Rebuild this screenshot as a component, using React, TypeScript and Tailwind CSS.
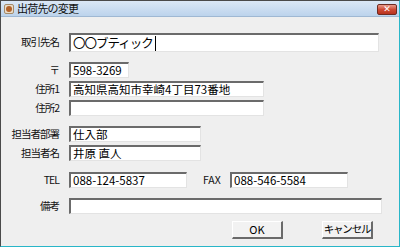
import React from "react";

const font = { fontFamily: '"MS UI Gothic","Noto Sans CJK JP","Noto Sans",sans-serif' };

function Field({ w, h = "h-[16px]", value = "", big = false }: { w: string; h?: string; value?: string; big?: boolean }) {
  return (
    <div
      className={`${w} ${h} bg-white border-t-2 border-l-2 border-b border-r border-t-[#6b6b6b] border-l-[#6b6b6b] border-b-[#e3e3e3] border-r-[#e3e3e3] flex items-center pl-[2px] overflow-hidden whitespace-nowrap ${big ? "text-[12.5px] tracking-[-1px]" : "text-[11.5px]"} text-black leading-none`}
    >
      {value}
      {big && <span className="inline-block w-[1px] h-[15px] bg-black ml-[2px]" />}
    </div>
  );
}

function Label({ children }: { children: React.ReactNode }) {
  return (
    <div className="w-[58px] text-right text-[10.5px] tracking-[-1px] text-[#111] leading-none whitespace-nowrap">
      {children}
    </div>
  );
}

export default function App() {
  return (
    <div className="w-[400px] h-[247px] bg-[#2b2b2b]" style={font}>
      <div className="w-[400px] h-[247px] flex flex-col border border-[#4a4a4a] border-r-[#29b6c8] border-b-[#29b6c8] bg-[#efefef]">
        {/* title bar */}
        <div className="h-[16px] flex items-center bg-gradient-to-b from-[#dbe8f6] to-[#bcd3ec] border-b border-[#9fb8d3] relative">
          <div className="ml-[3px] w-[10px] h-[10px] rounded-[2px] bg-[#e9dcc8] border border-[#a58c6a] flex items-center justify-center">
            <div className="w-[6px] h-[6px] rounded-full bg-[#b3622a]" />
          </div>
          <span className="ml-[3px] text-[11px] tracking-[-0.8px] text-[#111] leading-none">出荷先の変更</span>
          <div className="absolute right-[2px] top-[3px] w-[20px] h-[11px] rounded-[2px] border border-[#6e2b22] bg-gradient-to-b from-[#e89a8a] via-[#cf4a34] to-[#b8321e] flex items-center justify-center">
            <span className="text-white text-[9px] font-bold leading-none" style={{ fontFamily: '"DejaVu Sans",sans-serif' }}>✕</span>
          </div>
        </div>

        {/* body */}
        <div className="flex flex-col pt-[16px]">
          <div className="flex items-center gap-[10px]">
            <Label>取引先名</Label>
            <Field w="w-[310px]" h="h-[19px]" value="〇〇ブティック" big />
          </div>
          <div className="flex items-center gap-[10px] mt-[10px]">
            <Label>〒</Label>
            <Field w="w-[60px]" value="598-3269" />
          </div>
          <div className="flex items-center gap-[10px] mt-[3px]">
            <Label>住所1</Label>
            <Field w="w-[195px]" value="高知県高知市幸崎4丁目73番地" />
          </div>
          <div className="flex items-center gap-[10px] mt-[3px]">
            <Label>住所2</Label>
            <Field w="w-[195px]" />
          </div>
          <div className="flex items-center gap-[10px] mt-[10px]">
            <Label>担当者部署</Label>
            <Field w="w-[132px]" value="仕入部" />
          </div>
          <div className="flex items-center gap-[10px] mt-[3px]">
            <Label>担当者名</Label>
            <Field w="w-[132px]" value="井原 直人" />
          </div>
          <div className="flex items-center gap-[10px] mt-[11px]">
            <Label>TEL</Label>
            <Field w="w-[118px]" value="088-124-5837" />
            <div className="w-[17px] ml-[6px] text-[10.5px] text-[#111] leading-none">FAX</div>
            <Field w="w-[118px]" value="088-546-5584" />
          </div>
          <div className="flex items-center gap-[10px] mt-[10px]">
            <Label>備考</Label>
            <Field w="w-[313px]" />
          </div>
          <div className="flex mt-[7px] pl-[231px] gap-[39px]">
            <div className="w-[51px] h-[18px] bg-[#f2f2f2] border-t border-l border-t-white border-l-white border-b-2 border-r-2 border-b-[#6a6a6a] border-r-[#6a6a6a] flex items-center justify-center text-[11px] text-black leading-none">OK</div>
            <div className="w-[51px] h-[18px] bg-[#f2f2f2] border-t border-l border-t-white border-l-white border-b-2 border-r-2 border-b-[#6a6a6a] border-r-[#6a6a6a] flex items-center justify-center text-[10.5px] tracking-[-1.2px] text-black leading-none whitespace-nowrap">キャンセル</div>
          </div>
        </div>
      </div>
    </div>
  );
}
